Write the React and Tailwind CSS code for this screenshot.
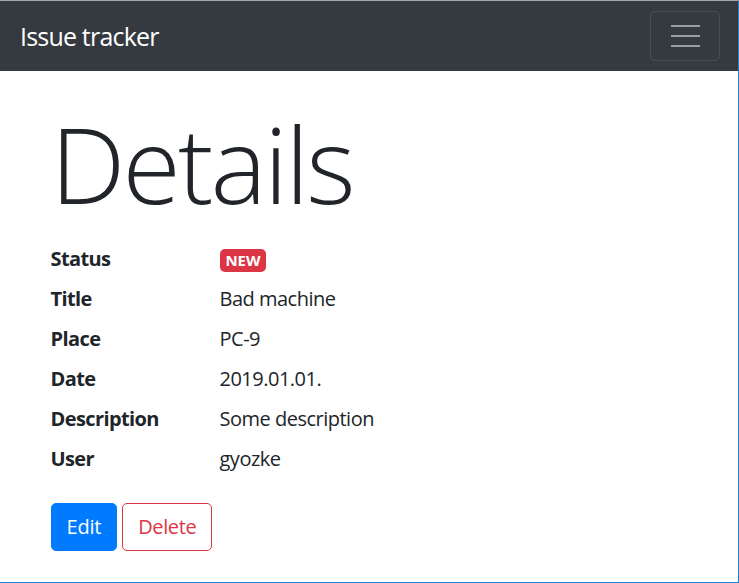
import React from "react";

const rows = [
  ["Status", "badge"],
  ["Title", "Bad machine"],
  ["Place", "PC-9"],
  ["Date", "2019.01.01."],
  ["Description", "Some description"],
  ["User", "gyozke"],
];

const App = () => {
  return (
    <div
      className="w-[739px] h-[583px] overflow-hidden bg-white border-t border-t-[#a8a8a8] border-r border-b border-r-[#1883d7] border-b-[#1883d7] text-[#212529]"
      style={{ fontFamily: '"Open Sans", "Noto Sans", sans-serif' }}
    >
      <nav className="h-[70px] bg-[#343a40] flex items-center justify-between pl-5 pr-[18px]">
        <span className="text-white text-[25px] leading-[37px] tracking-[-0.8px]">Issue tracker</span>
        <button className="w-[70px] h-[50px] rounded-[5px] border border-white/10 flex flex-col items-center justify-center gap-[8px]">
          <span className="block w-[29px] h-[2px] bg-[#9a9da0]"></span>
          <span className="block w-[29px] h-[2px] bg-[#9a9da0]"></span>
          <span className="block w-[29px] h-[2px] bg-[#9a9da0]"></span>
        </button>
      </nav>

      <div className="w-[675px] mx-auto px-[19px]">
        <h1 className="mt-[20px] mb-[9px] text-[106px] font-light leading-[144px] tracking-[-2.8px]">
          Details
        </h1>

        <dl className="grid grid-cols-[169px_1fr] gap-y-[10px] text-[20px] leading-[30px]">
          {rows.map(([label, value]) => (
            <React.Fragment key={label}>
              <dt className="font-bold tracking-[-0.6px]">{label}</dt>
              <dd className="tracking-[-0.5px]">
                {value === "badge" ? (
                  <span className="inline-block align-middle bg-[#dc3545] text-white text-[15px] font-bold leading-[15px] px-[6px] py-[4px] rounded-[5px] tracking-[-0.1px]">
                    NEW
                  </span>
                ) : (
                  value
                )}
              </dd>
            </React.Fragment>
          ))}
        </dl>

        <div className="mt-[29px] flex gap-[5px]">
          <button className="bg-[#007bff] border border-[#007bff] text-white text-[20px] leading-[30px] px-[15px] py-[8px] rounded-[5px] tracking-[-0.2px]">
            Edit
          </button>
          <button className="bg-white border border-[#dc3545] text-[#dc3545] text-[20px] leading-[30px] px-[15px] py-[8px] rounded-[5px] tracking-[-0.4px]">
            Delete
          </button>
        </div>
      </div>
    </div>
  );
};

export default App;
